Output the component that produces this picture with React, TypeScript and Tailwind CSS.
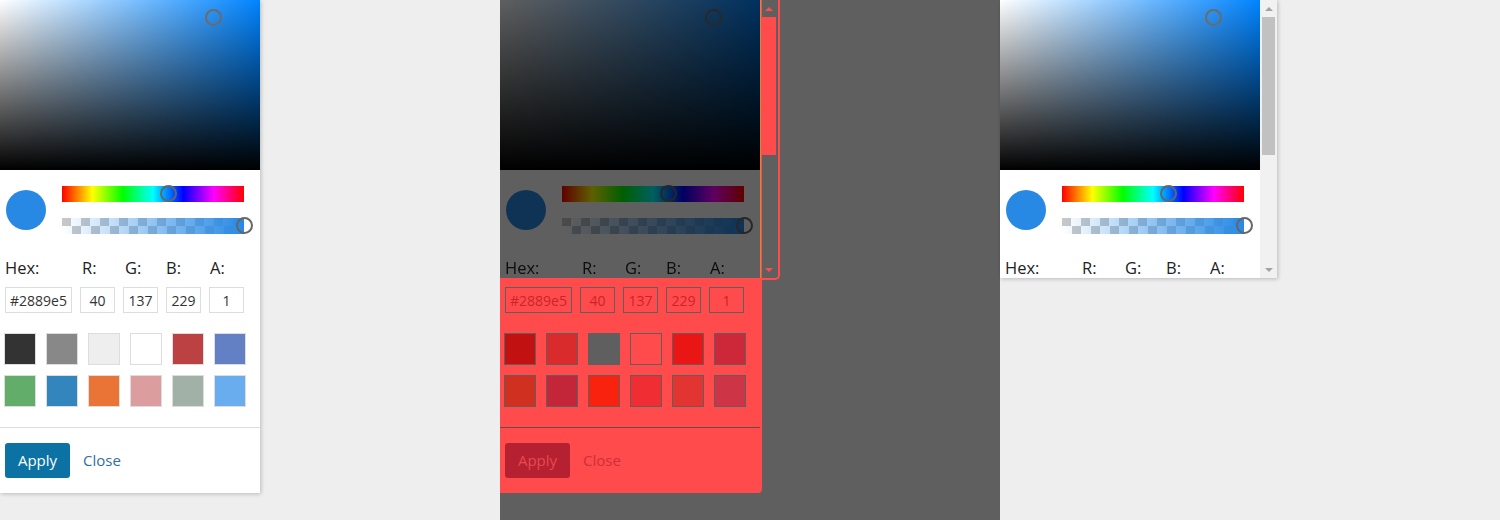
import React from "react";

type Variant = "normal" | "diff";

const NORMAL_SWATCHES = [
  "#333333", "#888888", "#eeeeee", "#ffffff", "#bb4143", "#6480c4",
  "#63ad6b", "#3385bd", "#e97436", "#dc9d9e", "#a2b1a7", "#69adee",
];
const DIFF_SWATCHES = [
  "#c21111", "#d92b2b", "#5f5f5f", "#ff4b4b", "#ea1616", "#cc2839",
  "#cf3020", "#c22638", "#f8220f", "#ef2d33", "#e23532", "#cd3446",
];

function Square() {
  return (
    <div className="relative h-[170px] w-[260px] bg-[#0084ff] bg-[linear-gradient(to_top,#000,rgba(0,0,0,0)),linear-gradient(to_right,#fff,rgba(255,255,255,0))]">
      <div className="absolute left-[205px] top-[9px] h-[17px] w-[17px] rounded-full border-2 border-[#6b6b6b]" />
    </div>
  );
}

function Sliders() {
  return (
    <div className="flex items-center pl-[6px] pt-4">
      <div className="h-10 w-10 rounded-full bg-[#2889e5]" />
      <div className="ml-4 flex w-[182px] flex-col gap-4">
        <div className="relative h-4 bg-[linear-gradient(to_right,#f00,#ff0,#0f0,#0ff,#00f,#f0f,#f00)]">
          <div className="absolute left-[98px] top-[-1px] h-[17px] w-[17px] rounded-full border-2 border-[#666666]" />
        </div>
        <div className="relative h-4 bg-[conic-gradient(#fff_25%,#c8c8c8_0_50%,#fff_0_75%,#c8c8c8_0)] bg-[length:19px_16px]">
          <div className="h-full w-full bg-[linear-gradient(to_right,rgba(40,137,229,0),#2889e5)]" />
          <div className="absolute left-[174px] top-[-1px] h-[17px] w-[17px] rounded-full border-2 border-[#666666]" />
        </div>
      </div>
    </div>
  );
}

function Labels() {
  return (
    <div className="mt-6 grid h-5 grid-cols-[67px_35px_35px_35px_35px] gap-x-2 px-[5px] text-[16.5px] leading-5 text-[#222222]">
      <span>Hex:</span>
      <span className="pl-[2px]">R:</span>
      <span className="pl-[2px]">G:</span>
      <span>B:</span>
      <span className="pl-px">A:</span>
    </div>
  );
}

function TopSection() {
  return (
    <div className="w-[260px] bg-white">
      <Square />
      <Sliders />
      <Labels />
    </div>
  );
}

function BottomSection({ variant }: { variant: Variant }) {
  const diff = variant === "diff";
  const inputCls = diff
    ? "border-[#5f5f5f] text-[#c8262c] bg-transparent"
    : "border-[#dddddd] text-[#333333] bg-white";
  const values = ["#2889e5", "40", "137", "229", "1"];
  const swatches = diff ? DIFF_SWATCHES : NORMAL_SWATCHES;
  return (
    <div
      className={
        diff
          ? "w-[262px] rounded-br-[4px] bg-[#ff4b4b] pt-[9px]"
          : "w-[260px] bg-white pt-[9px]"
      }
    >
      <div className="grid grid-cols-[67px_35px_35px_35px_35px] gap-x-2 px-[5px]">
        {values.map((v) => (
          <input
            key={v}
            readOnly
            value={v}
            className={`h-[26px] w-full border text-center text-[14px] leading-[24px] outline-none ${inputCls}`}
          />
        ))}
      </div>
      <div className="mt-5 grid grid-cols-[repeat(6,32px)] gap-[10px] px-[4px]">
        {swatches.map((c, i) => (
          <div
            key={i}
            className={`h-8 w-8 border ${diff ? "border-[#5f5f5f]" : "border-[#dddddd]"}`}
            style={{ backgroundColor: c }}
          />
        ))}
      </div>
      <div className={`mt-5 h-px ${diff ? "w-[260px] bg-[#6a4a4a]" : "bg-[#dddddd]"}`} />
      <div className="flex items-center px-[5px] pb-[15px] pt-[15px]">
        <button
          className={`h-[35px] w-[65px] rounded-[3px] text-[15px] ${
            diff ? "bg-[#b52131] text-[#e8484f]" : "bg-[#0b72a3] text-white"
          }`}
        >
          Apply
        </button>
        <button className={`ml-[13px] text-[15px] ${diff ? "text-[#c9313b]" : "text-[#2f6f9f]"}`}>
          Close
        </button>
      </div>
    </div>
  );
}

function UpArrow({ color }: { color: string }) {
  return <div className="h-0 w-0 border-x-4 border-b-4 border-x-transparent" style={{ borderBottomColor: color }} />;
}
function DownArrow({ color }: { color: string }) {
  return <div className="h-0 w-0 border-x-4 border-t-4 border-x-transparent" style={{ borderTopColor: color }} />;
}

function Scrollbar() {
  return (
    <div className="flex h-[278px] w-[17px] flex-col items-center bg-[#f1f1f1]">
      <div className="flex h-[17px] items-center justify-center">
        <UpArrow color="#a3a3a3" />
      </div>
      <div className="h-[138px] w-[13px] bg-[#c1c1c1]" />
      <div className="flex-1" />
      <div className="flex h-[17px] items-center justify-center">
        <DownArrow color="#a3a3a3" />
      </div>
    </div>
  );
}

function DiffScrollStrip() {
  return (
    <div className="-mb-[2px] flex h-[280px] w-[20px] rounded-br-[5px] border-b-2 border-l border-r-2 border-b-[#ff4b4b] border-l-[#d0883a] border-r-[#ff4b4b] bg-[#5f5f5f]">
      <div className="w-px bg-[#ff4b4b]" />
      <div className="flex w-[14px] flex-col items-center">
        <div className="flex h-[17px] items-center justify-center">
          <UpArrow color="#ff4b4b" />
        </div>
        <div className="h-[138px] w-[14px] bg-[#ff4b4b]" />
        <div className="flex-1" />
        <div className="flex h-[17px] items-center justify-center">
          <DownArrow color="#ff4b4b" />
        </div>
      </div>
    </div>
  );
}

export default function App() {
  return (
    <div className="flex h-[520px] w-[1500px] overflow-hidden font-['Open_Sans',sans-serif]">
      <div className="w-[500px] bg-[#eeeeee]">
        <div className="w-[260px] bg-white shadow-[1px_1px_4px_rgba(0,0,0,0.22)]">
          <TopSection />
          <BottomSection variant="normal" />
        </div>
      </div>
      <div className="flex w-[500px] flex-col bg-[#5f5f5f]">
        <div className="flex items-start">
          <div className="brightness-[.373]">
            <TopSection />
          </div>
          <DiffScrollStrip />
        </div>
        <div className="relative">
          <BottomSection variant="diff" />
        </div>
      </div>
      <div className="w-[500px] bg-[#eeeeee]">
        <div className="flex h-[278px] w-[277px] bg-white shadow-[1px_1px_4px_rgba(0,0,0,0.22)]">
          <div className="h-[278px] w-[260px] overflow-hidden">
            <TopSection />
          </div>
          <Scrollbar />
        </div>
      </div>
    </div>
  );
}
